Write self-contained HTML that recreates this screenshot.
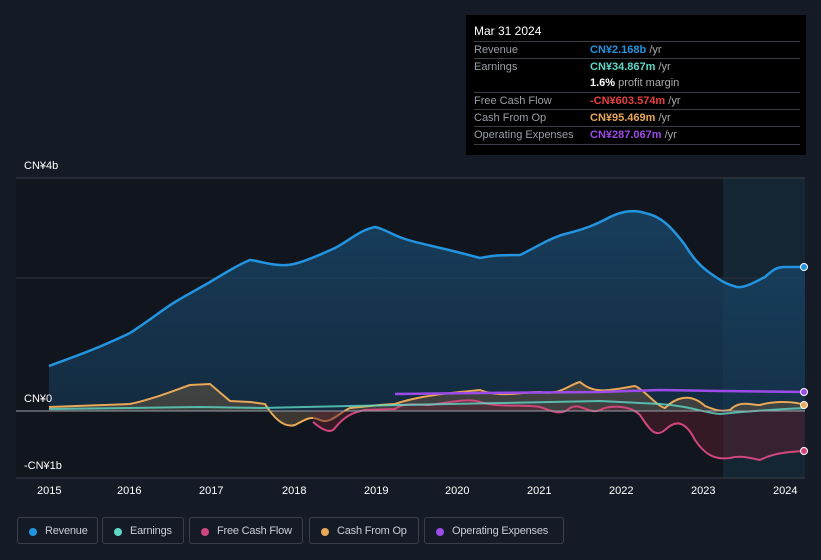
<!DOCTYPE html>
<html><head><meta charset="utf-8"><style>
body{margin:0;width:821px;height:560px;background:#151b26;font-family:"Liberation Sans",sans-serif;overflow:hidden;position:relative}
.tt{position:absolute;left:466px;top:15px;width:340px;height:140px;background:#000;color:#fff;font-size:11px}
.tt .h{position:absolute;left:8px;top:9px;font-size:12px}
.row{position:absolute;left:8px;width:326px;border-top:1px solid #3a3d44;height:17px;line-height:17px;color:#9a9ea6}
.row span{position:absolute;left:116px;font-weight:bold}
.row i{font-style:normal;color:#aaa;font-weight:normal}
.lg{position:absolute;top:517px;height:27px;border:1px solid #3a3f4b;border-radius:3px;color:#c8ccd4;font-size:11px;line-height:27px;box-sizing:border-box;padding-left:27px;letter-spacing:-0.2px}
.lg b{position:absolute;left:11px;top:10px;width:8px;height:8px;border-radius:50%}
.ax{position:absolute;color:#fff;font-size:11px}
</style></head><body>
<svg width="821" height="560" style="position:absolute;left:0;top:0">
<defs>
<linearGradient id="rg" x1="0" y1="0" x2="0" y2="1"><stop offset="0" stop-color="#1a4b70" stop-opacity=".75"/><stop offset="1" stop-color="#153a58" stop-opacity=".6"/></linearGradient>
</defs>
<rect x="16" y="178" width="789" height="300" fill="#11151d"/>
<rect x="723" y="178" width="82" height="300" fill="#15293b" opacity=".8"/>
<line x1="16" y1="178" x2="805" y2="178" stroke="#3a3f4a"/>
<line x1="16" y1="278" x2="805" y2="278" stroke="#2c3340"/>
<line x1="16" y1="478" x2="805" y2="478" stroke="#3a3f4a"/>
<path d="M49,366 C70,358 90,352 130,333 C150,320 165,308 175,302 C190,293 200,288 210,282 C230,270 240,264 250,260 C260,261 265,264 280,265 C290,266 300,264 335,248 C350,240 360,230 375,227 C385,229 390,234 405,239 C420,244 440,247 480,258 C490,256 495,255 520,255 C535,248 550,238 565,234 C585,229 595,225 610,217 C625,210 635,210 645,213 C660,216 670,225 685,245 C693,258 700,266 710,273 C720,280 725,284 737,287 C745,288 755,282 765,277 C772,271 775,267 785,267 L805,267 L805,411 L49,411 Z" fill="url(#rg)"/>
<path d="M49,366 C70,358 90,352 130,333 C150,320 165,308 175,302 C190,293 200,288 210,282 C230,270 240,264 250,260 C260,261 265,264 280,265 C290,266 300,264 335,248 C350,240 360,230 375,227 C385,229 390,234 405,239 C420,244 440,247 480,258 C490,256 495,255 520,255 C535,248 550,238 565,234 C585,229 595,225 610,217 C625,210 635,210 645,213 C660,216 670,225 685,245 C693,258 700,266 710,273 C720,280 725,284 737,287 C745,288 755,282 765,277 C772,271 775,267 785,267 L805,267" fill="none" stroke="#2394e0" stroke-width="2.5"/>
<path d="M49,407 L130,404 C150,400 170,392 190,385 L210,384 L230,401 L250,402 L265,404 C275,420 285,428 295,425 C305,420 310,415 320,420 C330,425 340,412 350,408 L380,405 L395,404 C420,395 460,392 480,390 C500,398 520,392 540,392 C560,396 570,384 580,382 C595,395 610,390 635,386 C645,390 655,405 665,408 C675,398 690,392 705,406 C715,410 720,412 730,410 C740,400 750,405 760,405 C770,402 790,400 805,405 L805,411 L49,411 Z" fill="#5a5040" opacity=".6"/>
<path d="M49,407 L130,404 C150,400 170,392 190,385 L210,384 L230,401 L250,402 L265,404 C275,420 285,428 295,425 C305,420 310,415 320,420 C330,425 340,412 350,408 L380,405 L395,404 C420,395 460,392 480,390 C500,398 520,392 540,392 C560,396 570,384 580,382 C595,395 610,390 635,386 C645,390 655,405 665,408 C675,398 690,392 705,406 C715,410 720,412 730,410 C740,400 750,405 760,405 C770,402 790,400 805,405" fill="none" stroke="#e8a857" stroke-width="2"/>
<path d="M313,422 C320,428 330,435 335,428 C345,415 355,412 365,410 L395,409 C405,402 415,405 430,405 C450,402 470,398 480,402 C500,408 520,404 540,407 C550,410 560,417 570,408 C580,402 590,415 600,410 C610,405 630,405 640,415 C650,430 655,438 665,430 C675,420 685,420 695,440 C705,455 715,460 730,458 C740,455 750,458 760,460 C770,455 780,452 805,451 L805,411 L313,411 Z" fill="#5a2030" opacity=".5"/>
<path d="M313,422 C320,428 330,435 335,428 C345,415 355,412 365,410 L395,409 C405,402 415,405 430,405 C450,402 470,398 480,402 C500,408 520,404 540,407 C550,410 560,417 570,408 C580,402 590,415 600,410 C610,405 630,405 640,415 C650,430 655,438 665,430 C675,420 685,420 695,440 C705,455 715,460 730,458 C740,455 750,458 760,460 C770,455 780,452 805,451" fill="none" stroke="#d0477e" stroke-width="2"/>
<path d="M49,409 L200,407 L260,408 L350,406 L500,403 L600,401 L660,404 C690,406 705,413 720,414 C740,412 760,410 805,408" fill="none" stroke="#5fd8c6" stroke-width="2" opacity=".8"/>
<path d="M395,394 L480,393 L600,392 L660,390 L720,391 L805,392" fill="none" stroke="#9d4be8" stroke-width="2.5"/>
<line x1="16" y1="411" x2="805" y2="411" stroke="#9aa0a8" stroke-width="1"/>
<circle cx="804" cy="267" r="3.5" fill="#2394e0" stroke="#fff"/>
<circle cx="804" cy="392" r="3.5" fill="#9d4be8" stroke="#fff"/>
<circle cx="804" cy="405" r="3.5" fill="#e8a857" stroke="#fff"/>
<circle cx="804" cy="451" r="3.5" fill="#d0477e" stroke="#fff"/>
</svg>
<div class="ax" style="left:24px;top:160px">CN¥4b</div>
<div class="ax" style="left:24px;top:393px">CN¥0</div>
<div class="ax" style="left:24px;top:460px">-CN¥1b</div>
<div class="ax" style="left:37px;top:485px">2015</div>
<div class="ax" style="left:117px;top:485px">2016</div>
<div class="ax" style="left:199px;top:485px">2017</div>
<div class="ax" style="left:282px;top:485px">2018</div>
<div class="ax" style="left:364px;top:485px">2019</div>
<div class="ax" style="left:445px;top:485px">2020</div>
<div class="ax" style="left:527px;top:485px">2021</div>
<div class="ax" style="left:609px;top:485px">2022</div>
<div class="ax" style="left:691px;top:485px">2023</div>
<div class="ax" style="left:773px;top:485px">2024</div>
<div class="tt"><div class="h">Mar 31 2024</div>
<div class="row" style="top:26px">Revenue<span style="color:#2394e0">CN¥2.168b <i>/yr</i></span></div>
<div class="row" style="top:43px">Earnings<span style="color:#5fd8c6">CN¥34.867m <i>/yr</i></span></div>
<div class="row" style="top:60px;border:0"><span style="color:#fff">1.6% <i>profit margin</i></span></div>
<div class="row" style="top:77px">Free Cash Flow<span style="color:#e84040">-CN¥603.574m <i>/yr</i></span></div>
<div class="row" style="top:94px">Cash From Op<span style="color:#e8a857">CN¥95.469m <i>/yr</i></span></div>
<div class="row" style="top:111px">Operating Expenses<span style="color:#9d4be8">CN¥287.067m <i>/yr</i></span></div>
<div class="row" style="top:129px;height:0"></div>
</div>
<div class="lg" style="left:17px;width:81px"><b style="background:#2394e0"></b>Revenue</div>
<div class="lg" style="left:102px;width:82px"><b style="background:#5fd8c6"></b>Earnings</div>
<div class="lg" style="left:189px;width:114px"><b style="background:#d0477e"></b>Free Cash Flow</div>
<div class="lg" style="left:309px;width:110px"><b style="background:#e8a857"></b>Cash From Op</div>
<div class="lg" style="left:424px;width:140px"><b style="background:#9d4be8"></b>Operating Expenses</div>
</body></html>
